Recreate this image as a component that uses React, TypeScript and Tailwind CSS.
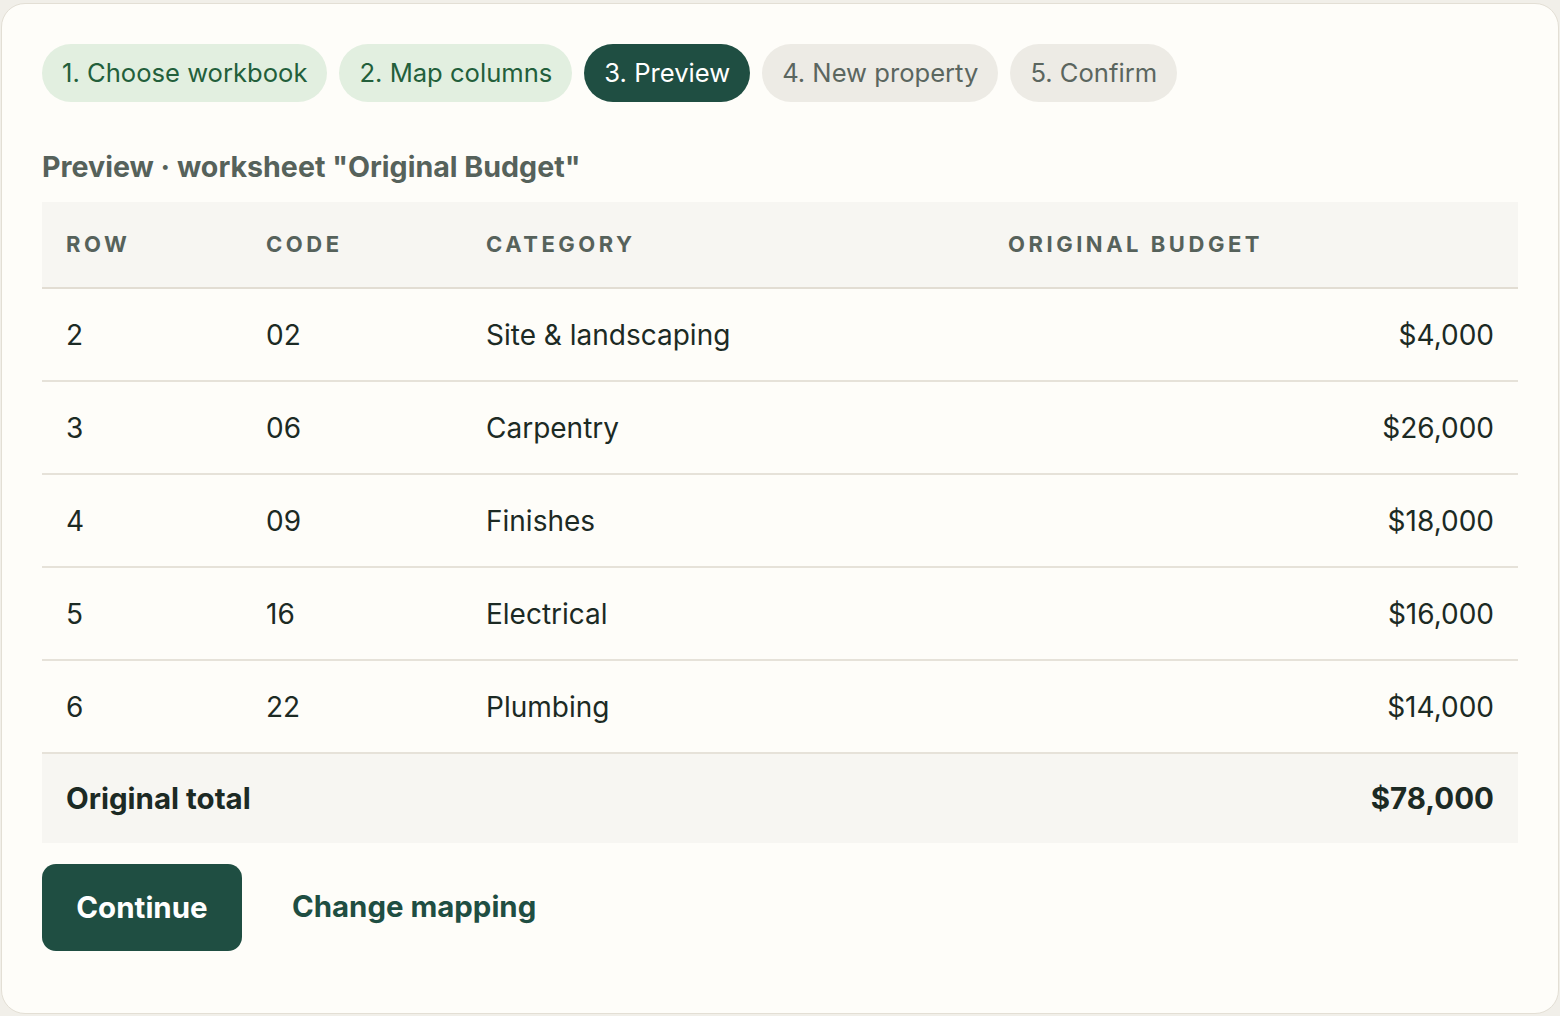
const steps = [
  { label: '1. Choose workbook', state: 'done' },
  { label: '2. Map columns', state: 'done' },
  { label: '3. Preview', state: 'active' },
  { label: '4. New property', state: 'todo' },
  { label: '5. Confirm', state: 'todo' },
];

const rows = [
  { row: 2, code: '02', category: 'Site & landscaping', budget: '$4,000' },
  { row: 3, code: '06', category: 'Carpentry', budget: '$26,000' },
  { row: 4, code: '09', category: 'Finishes', budget: '$18,000' },
  { row: 5, code: '16', category: 'Electrical', budget: '$16,000' },
  { row: 6, code: '22', category: 'Plumbing', budget: '$14,000' },
];

const pillClass = (state: string) => {
  if (state === 'active') return 'bg-[#1f4e42] text-white';
  if (state === 'done') return 'bg-[#e2efe0] text-[#235f3b]';
  return 'bg-[#edebe5] text-[#5b665f]';
};

export default function App() {
  return (
    <div
      className="min-h-screen bg-[#f1efe9] pt-[3px] px-[1px] pb-[2px]"
      style={{ fontFamily: 'Inter, "Noto Sans", sans-serif' }}
    >
      <div className="h-[1011px] rounded-[24px] border border-[#e3dfd5] bg-[#fefdf9] px-[40px] pt-[40px]">
        {/* Steps */}
        <div className="flex gap-[12px]">
          {steps.map((s) => (
            <div
              key={s.label}
              className={`h-[58px] flex items-center rounded-full px-[20px] text-[25.6px] ${pillClass(s.state)}`}
            >
              {s.label}
            </div>
          ))}
        </div>

        <h2 className="mt-[48px] text-[28.6px] font-bold text-[#56625b] leading-[34px]">
          Preview · worksheet "Original Budget"
        </h2>

        {/* Table */}
        <table className="mt-[18px] w-full table-fixed border-collapse text-[28px] text-[#1c2a24]">
          <colgroup>
            <col className="w-[200px]" />
            <col className="w-[220px]" />
            <col className="w-[522px]" />
            <col />
          </colgroup>
          <thead>
            <tr className="h-[86px] bg-[#f7f6f2] border-b-2 border-[#e2ddd3]">
              {['Row', 'Code', 'Category', 'Original budget'].map((h) => (
                <th
                  key={h}
                  className="px-[24px] text-left text-[22px] font-bold uppercase tracking-[0.16em] text-[#56625b]"
                >
                  {h}
                </th>
              ))}
            </tr>
          </thead>
          <tbody>
            {rows.map((r) => (
              <tr key={r.row} className="h-[93px] border-b-2 border-[#e6e2d9]">
                <td className="px-[24px]">{r.row}</td>
                <td className="px-[24px]">{r.code}</td>
                <td className="px-[24px]">{r.category}</td>
                <td className="px-[24px] text-right">{r.budget}</td>
              </tr>
            ))}
            <tr className="h-[90px] bg-[#f7f6f2] text-[29.5px] font-bold">
              <td className="px-[24px]" colSpan={3}>
                Original total
              </td>
              <td className="px-[24px] text-right">$78,000</td>
            </tr>
          </tbody>
        </table>

        {/* Actions */}
        <div className="mt-[21px] flex items-center gap-[50px]">
          <button className="h-[87px] w-[200px] rounded-[14px] bg-[#1f4e42] text-[29.5px] font-bold text-white">
            Continue
          </button>
          <button className="text-[29.4px] font-bold text-[#1f4e42]">Change mapping</button>
        </div>
      </div>
    </div>
  );
}
